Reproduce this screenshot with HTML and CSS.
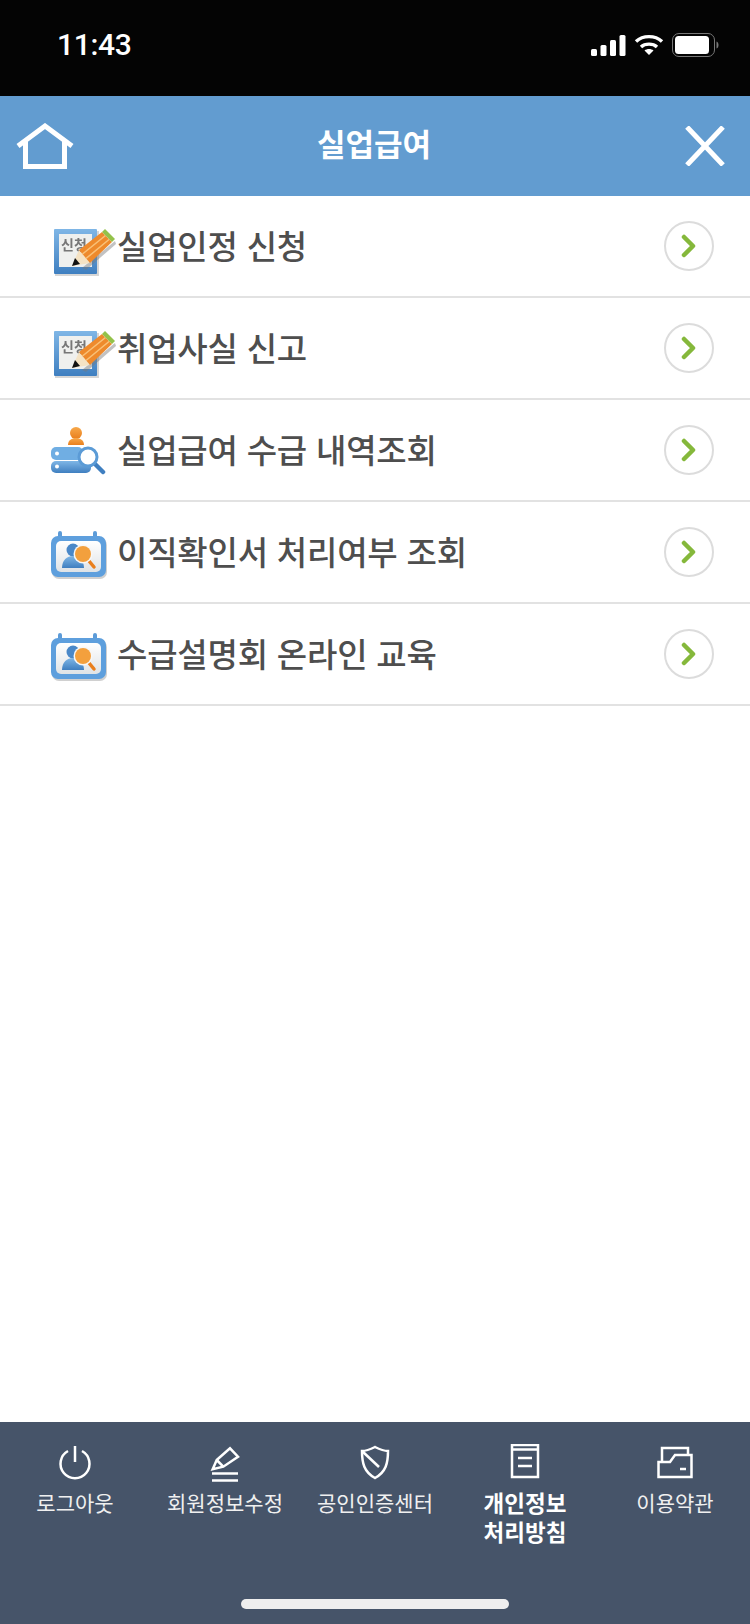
FILE: index.html

```html
<!DOCTYPE html>
<html lang="ko">
<head>
<meta charset="UTF-8">
<meta name="viewport" content="width=device-width, initial-scale=1.0">
<title>실업급여</title>
<link rel="stylesheet" href="styles.css">
</head>
<body>
<svg class="defs" width="0" height="0">
    <defs>
        <linearGradient id="blueGrad" x1="0" y1="0" x2="0" y2="1">
            <stop offset="0" stop-color="#7fb6e6"/>
            <stop offset="1" stop-color="#3f7fc0"/>
        </linearGradient>
        <linearGradient id="paperGrad" x1="0" y1="0" x2="0" y2="1">
            <stop offset="0" stop-color="#ffffff"/>
            <stop offset="1" stop-color="#dfe3e6"/>
        </linearGradient>
        <linearGradient id="orangeGrad" x1="0" y1="0" x2="0" y2="1">
            <stop offset="0" stop-color="#f7a84a"/>
            <stop offset="1" stop-color="#e97f1d"/>
        </linearGradient>
        <symbol id="icon-apply" viewBox="0 0 66 60">
            <rect x="5" y="15" width="44" height="45" fill="#8a8a8a" opacity="0.35"/>
            <rect x="4" y="13" width="43" height="45" rx="1" fill="url(#blueGrad)"/>
            <rect x="9" y="18" width="33" height="33" fill="#eff0ee"/>
            <text x="11" y="34" class="icon-text">신청</text>
            <path d="M32 52l33-27 1 3-30 26z" fill="#777" opacity="0.45"/>
            <path d="M22 50l7-16 11 13z" fill="#f5e3c4"/>
            <path d="M22 50l3-8 5 6z" fill="#111"/>
            <path d="M29 34l23-18 10 10-22 21z" fill="#ee8a2c"/>
            <path d="M32.500 38l23-18.500M36 42.500l23-19" stroke="#f9c178" stroke-width="1.600"/>
            <path d="M52 16l3-3 10 10-3 3z" fill="#93c24a"/>
        </symbol>
        <symbol id="icon-search" viewBox="0 0 66 60">
            <circle cx="26" cy="13" r="6" fill="url(#orangeGrad)"/>
            <path d="M18 25c0-5 4-7 8-7s8 2 8 7z" fill="url(#orangeGrad)"/>
            <rect x="1" y="27" width="32" height="13" rx="5" fill="#70aee3"/>
            <rect x="1" y="41" width="40" height="12" rx="5" fill="url(#blueGrad)"/>
            <circle cx="7" cy="33.500" r="2" fill="#fff"/>
            <circle cx="7" cy="46.500" r="2" fill="#fff"/>
            <path d="M45 44l8 8" stroke="#3f7fc0" stroke-width="4.500" stroke-linecap="round"/>
            <circle cx="38" cy="37" r="9" fill="#fff" stroke="#5b9bd6" stroke-width="3"/>
        </symbol>
        <symbol id="icon-calendar" viewBox="0 0 66 60">
            <path d="M10 15v-4M45 15v-4" stroke="#5c9bd8" stroke-width="4" stroke-linecap="round"/>
            <rect x="2" y="16" width="55" height="41" rx="7" fill="#8a8a8a" opacity="0.4"/>
            <rect x="1" y="14" width="55" height="41" rx="7" fill="#5e9fdd"/>
            <rect x="6" y="19" width="45" height="31" rx="5" fill="url(#paperGrad)"/>
            <circle cx="23" cy="28" r="6.500" fill="#4a88c8"/>
            <path d="M12 46c0-8 5-12 11-12s11 4 11 12z" fill="url(#blueGrad)"/>
            <path d="M39 39l5 6" stroke="#e97f1d" stroke-width="3.500" stroke-linecap="round"/>
            <circle cx="33" cy="32" r="9.500" fill="#f7f7f7"/>
            <circle cx="33" cy="32" r="8" fill="#f3a03d"/>
        </symbol>
    </defs>
</svg>

<div class="status-bar">
    <span class="time">11:43</span>
    <div class="status-icons">
        <svg width="35" height="21" viewBox="0 0 35 21" fill="#fff">
            <rect x="0" y="14" width="6" height="7" rx="1.500"/>
            <rect x="9.500" y="10" width="6" height="11" rx="1.500"/>
            <rect x="19" y="5" width="6" height="16" rx="1.500"/>
            <rect x="28.500" y="0" width="6" height="21" rx="1.500"/>
        </svg>
        <svg width="30" height="22" viewBox="0 0 30 22" fill="none" stroke="#fff" stroke-width="3.400">
            <path d="M2 7.500c7-6.500 19-6.500 26 0"/>
            <path d="M7 13c4-3.800 12-3.800 16 0"/>
            <path d="M15 21l-4.500-4.500c2.500-2 6.500-2 9 0z" fill="#fff" stroke="none"/>
        </svg>
        <svg width="47" height="24" viewBox="0 0 47 24">
            <rect x="0.500" y="0.500" width="42" height="23" rx="6.500" fill="none" stroke="#777"/>
            <rect x="3" y="3" width="34" height="18" rx="3.500" fill="#fff"/>
            <path d="M44.500 8.500v7c1.500-.5 2-2 2-3.500s-.5-3-2-3.500z" fill="#777"/>
        </svg>
    </div>
</div>

<header class="top-bar">
    <svg class="home-icon" width="58" height="46" viewBox="0 0 58 46" fill="none" stroke="#fff" stroke-width="5">
        <path d="M2 23L29 3l27 20"/>
        <path d="M9.500 17v26.500h39V17"/>
    </svg>
    <h1 class="page-title">실업급여</h1>
    <svg class="close-icon" width="40" height="40" viewBox="0 0 40 40" stroke="#fff" stroke-width="5">
        <path d="M2 1l36 38M38 1L2 39"/>
    </svg>
</header>

<main class="menu">
    <a class="menu-row">
        <svg class="row-icon"><use href="#icon-apply"/></svg>
        <span class="row-label">실업인정 신청</span>
        <span class="row-arrow"><svg width="18" height="24" viewBox="0 0 18 24"><path d="M4 3l9 9-9 9"/></svg></span>
    </a>
    <a class="menu-row">
        <svg class="row-icon"><use href="#icon-apply"/></svg>
        <span class="row-label">취업사실 신고</span>
        <span class="row-arrow"><svg width="18" height="24" viewBox="0 0 18 24"><path d="M4 3l9 9-9 9"/></svg></span>
    </a>
    <a class="menu-row">
        <svg class="row-icon"><use href="#icon-search"/></svg>
        <span class="row-label">실업급여 수급 내역조회</span>
        <span class="row-arrow"><svg width="18" height="24" viewBox="0 0 18 24"><path d="M4 3l9 9-9 9"/></svg></span>
    </a>
    <a class="menu-row">
        <svg class="row-icon"><use href="#icon-calendar"/></svg>
        <span class="row-label">이직확인서 처리여부 조회</span>
        <span class="row-arrow"><svg width="18" height="24" viewBox="0 0 18 24"><path d="M4 3l9 9-9 9"/></svg></span>
    </a>
    <a class="menu-row">
        <svg class="row-icon"><use href="#icon-calendar"/></svg>
        <span class="row-label">수급설명회 온라인 교육</span>
        <span class="row-arrow"><svg width="18" height="24" viewBox="0 0 18 24"><path d="M4 3l9 9-9 9"/></svg></span>
    </a>
</main>

<footer class="bottom-bar">
    <nav class="bottom-nav">
        <a class="nav-item">
            <svg class="nav-icon" viewBox="0 0 36 38"><path d="M18 2v16"/><path d="M11 7a14.500 14.500 0 1 0 14 0"/></svg>
            <span>로그아웃</span>
        </a>
        <a class="nav-item">
            <svg class="nav-icon" viewBox="0 0 36 38"><path d="M9.700 16L23 4.300l8 8.400-14.700 10-10.600 2.600z"/><path d="M9.700 16l6.600 6.700"/><path d="M5 29.500h26"/><path d="M5 36.500h26"/></svg>
            <span>회원정보수정</span>
        </a>
        <a class="nav-item">
            <svg class="nav-icon" viewBox="0 0 36 38"><path d="M5 7c5 0 9-2 13-4 4 2 8 4 13 4 0 12-2 21-13 27C7 28 5 19 5 7z"/><path d="M5 7l17 16"/></svg>
            <span>공인인증센터</span>
        </a>
        <a class="nav-item active">
            <svg class="nav-icon" viewBox="0 0 36 38"><path d="M5 1h26v32H5z"/><path d="M5 5.500h26"/><path d="M11 14h14"/><path d="M11 22h14"/></svg>
            <span>개인정보<br>처리방침</span>
        </a>
        <a class="nav-item">
            <svg class="nav-icon" viewBox="0 0 36 38"><path d="M1.500 18v15h33V11H18l-5 7z"/><path d="M5 17V4h26v7"/><path d="M23 25h6"/></svg>
            <span>이용약관</span>
        </a>
    </nav>
    <div class="home-indicator"></div>
</footer>
</body>
</html>
```

FILE: styles.css

```css
* {
    box-sizing: border-box;
}

body {
    margin: 0;
    width: 750px;
    height: 1624px;
    display: flex;
    flex-direction: column;
    background: #fff;
    font-family: "Noto Sans CJK KR", "Noto Sans", sans-serif;
    overflow: hidden;
}

.defs {
    position: absolute;
}

.icon-text {
    font-size: 14px;
    font-weight: 700;
    fill: #777;
}

/* status bar */
.status-bar {
    height: 96px;
    flex-shrink: 0;
    background: #040404;
    display: flex;
    align-items: flex-start;
    justify-content: space-between;
    padding: 26px 31px 0 57px;
}

.time {
    color: #fff;
    font-family: Roboto, sans-serif;
    font-size: 30px;
    font-weight: 500;
    line-height: 38px;
    letter-spacing: -0.3px;
}

.status-icons {
    display: flex;
    align-items: center;
    gap: 8px;
    padding-top: 7px;
}

/* header */
.top-bar {
    height: 100px;
    flex-shrink: 0;
    background: #629cd0;
    display: flex;
    align-items: center;
    padding: 0 25px 0 16px;
}

.page-title {
    flex: 1;
    margin: 0;
    padding: 0 11px 6px 0;
    color: #fff;
    font-size: 31px;
    font-weight: 700;
    line-height: 40px;
    text-align: center;
}

/* menu list */
.menu {
    flex: 1;
}

.menu-row {
    height: 102px;
    display: flex;
    align-items: center;
    border-bottom: 2px solid #e2e2e2;
    padding: 0 36px 0 50px;
}

.row-icon {
    width: 66px;
    height: 60px;
    flex-shrink: 0;
    filter: blur(0.6px);
}

.row-label {
    flex: 1;
    color: #4e4e4e;
    font-size: 33px;
    font-weight: 500;
    letter-spacing: -0.2px;
    line-height: 46px;
    margin-left: 1px;
    padding-bottom: 2px;
}

.row-arrow {
    width: 50px;
    height: 50px;
    border: 2px solid #dcdcdc;
    border-radius: 50%;
    display: flex;
    align-items: center;
    justify-content: center;
}

.row-arrow path {
    fill: none;
    stroke: #85b83b;
    stroke-width: 4.500;
    stroke-linecap: round;
    stroke-linejoin: round;
}

/* bottom nav */
.bottom-bar {
    height: 202px;
    flex-shrink: 0;
    background: #465469;
    display: flex;
    flex-direction: column;
}

.bottom-nav {
    display: flex;
    padding-top: 22px;
}

.nav-item {
    width: 150px;
    display: flex;
    flex-direction: column;
    align-items: center;
    gap: 6px;
    color: #f0f0f0;
    font-size: 21px;
    line-height: 29px;
    text-align: center;
}

.nav-item.active {
    color: #fff;
    font-size: 22.500px;
    font-weight: 700;
}

.nav-icon {
    width: 36px;
    height: 38px;
    fill: none;
    stroke: #fff;
    stroke-width: 2.500;
}

.home-indicator {
    width: 268px;
    height: 10px;
    border-radius: 5px;
    background: #eee;
    margin: auto auto 15px;
}
```
